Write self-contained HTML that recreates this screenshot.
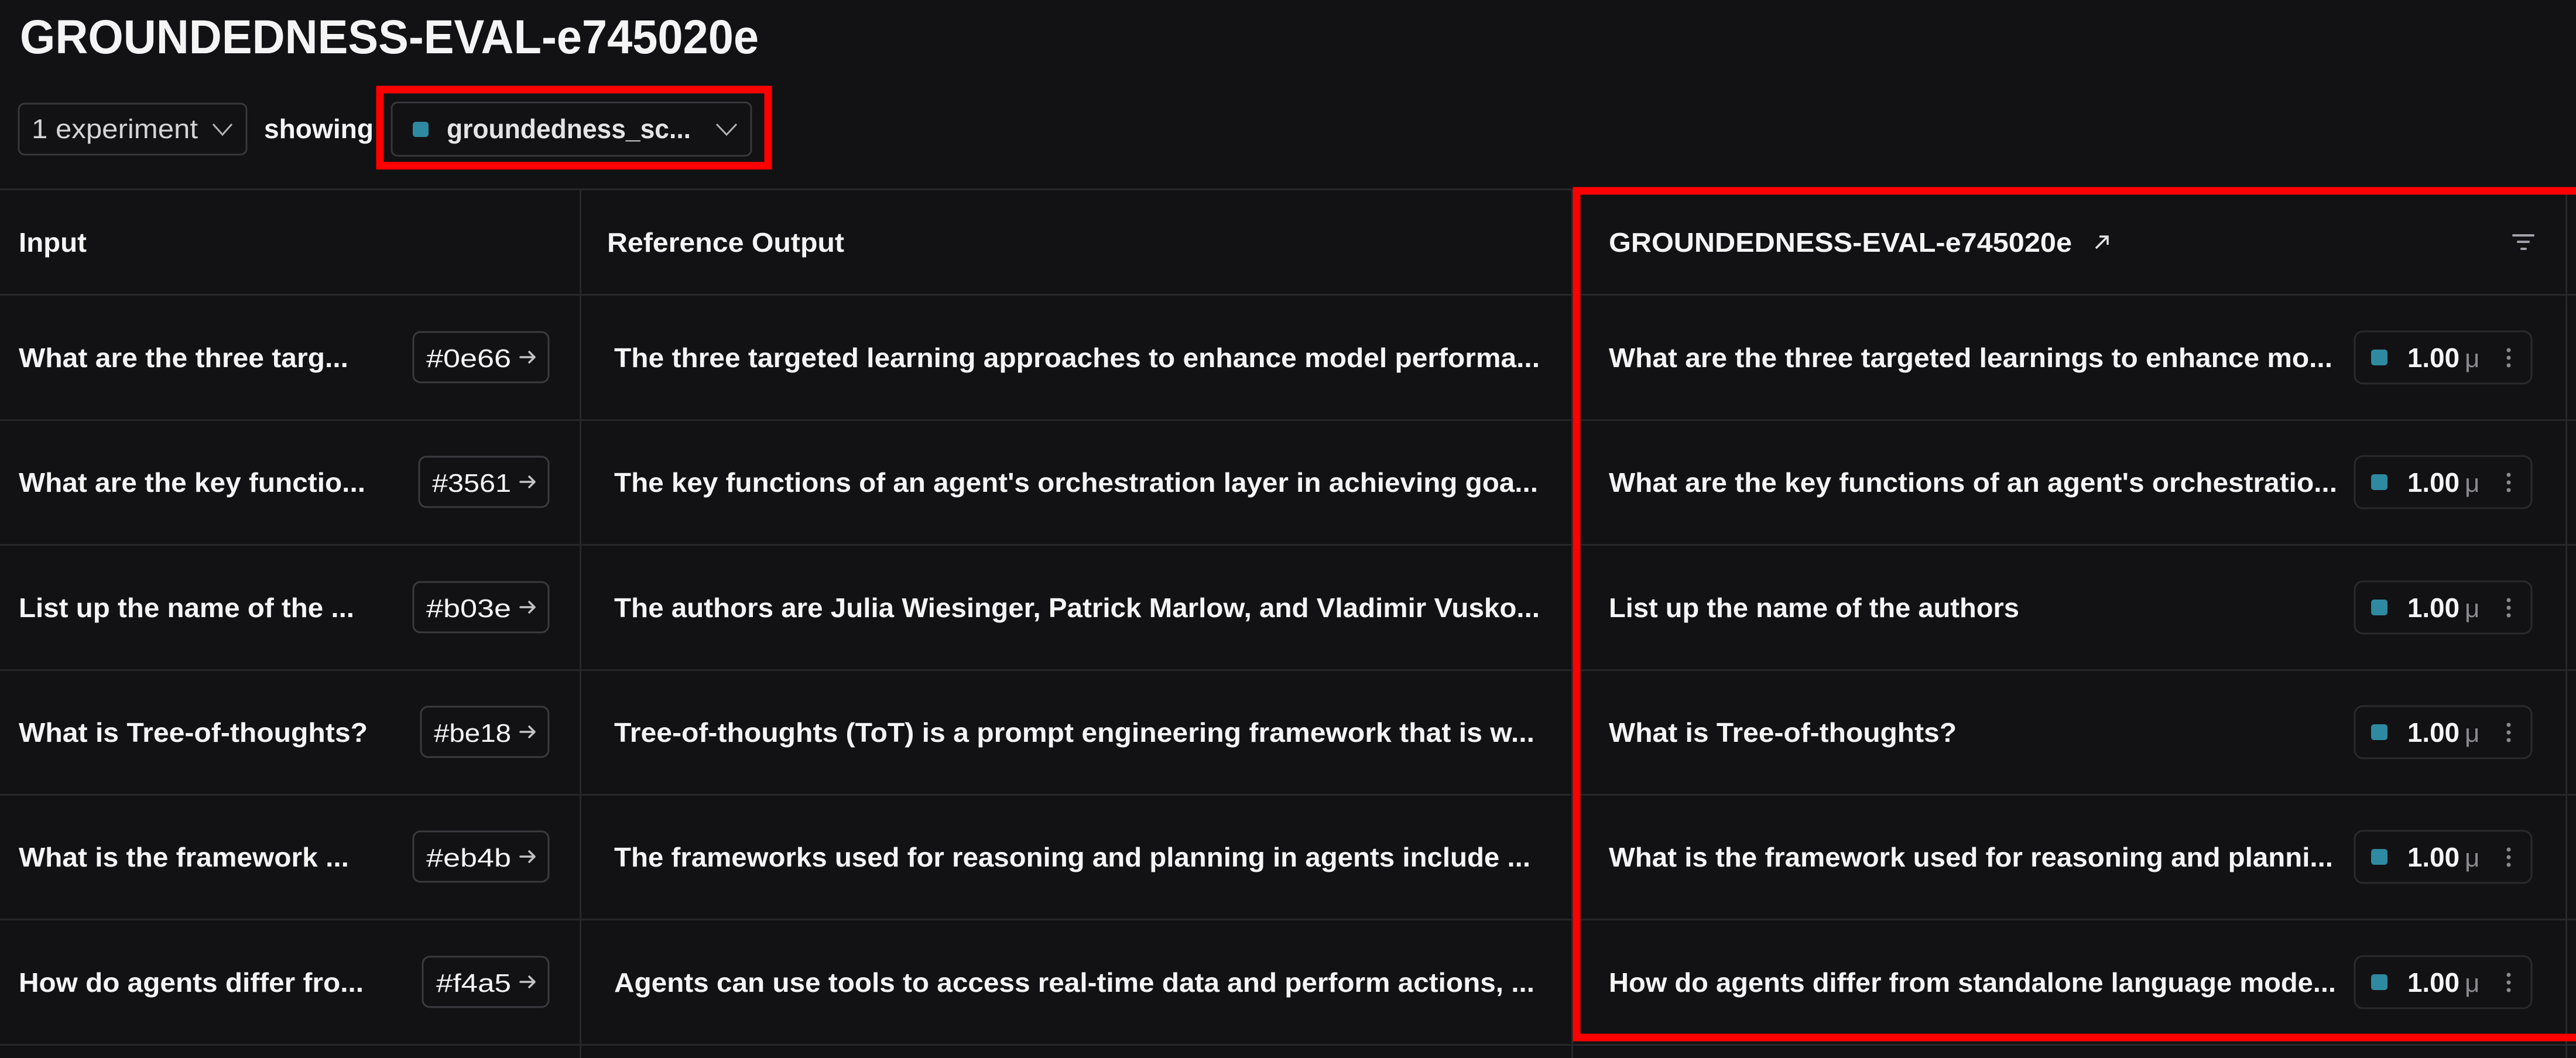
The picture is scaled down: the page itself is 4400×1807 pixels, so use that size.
<!DOCTYPE html>
<html><head><meta charset="utf-8"><style>html,body{margin:0;padding:0;background:#121214;}svg{display:block}</style></head>
<body>
<svg width="4400" height="1807" viewBox="0 0 4400 1807" xmlns="http://www.w3.org/2000/svg" font-family="Liberation Sans, Arial, sans-serif">
<rect width="4400" height="1807" fill="#121214"/>
<!-- title -->
<text x="34" y="91" font-size="82" font-weight="bold" fill="#f4f4f5" textLength="1262" lengthAdjust="spacingAndGlyphs">GROUNDEDNESS-EVAL-e745020e</text>
<!-- controls -->
<rect x="32" y="177" width="389" height="87" rx="10" fill="none" stroke="#37373c" stroke-width="3"/>
<text x="54" y="236" font-size="46" fill="#d4d4d8" textLength="284" lengthAdjust="spacingAndGlyphs">1 experiment</text>
<path d="M364 212 L380 230 L396 212" fill="none" stroke="#b4b4b8" stroke-width="3"/>
<text x="451" y="236" font-size="46" font-weight="bold" fill="#f4f4f5" textLength="187" lengthAdjust="spacingAndGlyphs">showing</text>
<rect x="669" y="175" width="614" height="91" rx="10" fill="none" stroke="#37373c" stroke-width="3"/>
<rect x="705" y="208" width="27" height="26" rx="5" fill="#2e8aa0"/>
<text x="763" y="236" font-size="46" font-weight="bold" fill="#e4e4e7" textLength="417" lengthAdjust="spacingAndGlyphs">groundedness_sc...</text>
<path d="M1224 212 L1241 230 L1258 212" fill="none" stroke="#b4b4b8" stroke-width="3"/>
<rect x="649" y="153" width="663" height="130" fill="none" stroke="#ff0000" stroke-width="13"/>
<!-- grid lines -->
<g fill="#27272b">
<rect x="0" y="322" width="4400" height="3"/>
<rect x="0" y="502" width="4400" height="3"/>
<rect x="0" y="716" width="4400" height="3"/>
<rect x="0" y="929" width="4400" height="3"/>
<rect x="0" y="1143" width="4400" height="3"/>
<rect x="0" y="1356" width="4400" height="3"/>
<rect x="0" y="1569" width="4400" height="3"/>
<rect x="0" y="1783" width="4400" height="3"/>
<rect x="990" y="322" width="3" height="1485"/>
<rect x="2684" y="322" width="3" height="1485"/>
<rect x="4382" y="322" width="3" height="1485"/>
</g>
<!-- headers -->
<g font-size="46" font-weight="bold" fill="#f4f4f5">
<text x="32" y="430" textLength="116" lengthAdjust="spacingAndGlyphs">Input</text>
<text x="1037" y="430" textLength="405" lengthAdjust="spacingAndGlyphs">Reference Output</text>
<text x="2748" y="430" textLength="791" lengthAdjust="spacingAndGlyphs">GROUNDEDNESS-EVAL-e745020e</text>
</g>
<path d="M3580 424 L3600 404 M3586 404 L3600 404 L3600 418" fill="none" stroke="#e4e4e7" stroke-width="3.5"/>
<g stroke="#a1a1aa" stroke-width="4" stroke-linecap="round">
<line x1="4293" y1="402" x2="4327" y2="402"/><line x1="4301" y1="413" x2="4319" y2="413"/><line x1="4307" y1="425" x2="4314" y2="425"/>
</g>
<!-- rows -->
<g font-size="46" font-weight="bold" fill="#f4f4f5">
<text x="32" y="627" textLength="563" lengthAdjust="spacingAndGlyphs">What are the three targ...</text>
<text x="32" y="840" textLength="592" lengthAdjust="spacingAndGlyphs">What are the key functio...</text>
<text x="32" y="1054" textLength="573" lengthAdjust="spacingAndGlyphs">List up the name of the ...</text>
<text x="32" y="1267" textLength="596" lengthAdjust="spacingAndGlyphs">What is Tree-of-thoughts?</text>
<text x="32" y="1480" textLength="564" lengthAdjust="spacingAndGlyphs">What is the framework ...</text>
<text x="32" y="1694" textLength="589" lengthAdjust="spacingAndGlyphs">How do agents differ fro...</text>

<text x="1049" y="627" textLength="1581" lengthAdjust="spacingAndGlyphs">The three targeted learning approaches to enhance model performa...</text>
<text x="1049" y="840" textLength="1578" lengthAdjust="spacingAndGlyphs">The key functions of an agent's orchestration layer in achieving goa...</text>
<text x="1049" y="1054" textLength="1581" lengthAdjust="spacingAndGlyphs">The authors are Julia Wiesinger, Patrick Marlow, and Vladimir Vusko...</text>
<text x="1049" y="1267" textLength="1572" lengthAdjust="spacingAndGlyphs">Tree-of-thoughts (ToT) is a prompt engineering framework that is w...</text>
<text x="1049" y="1480" textLength="1565" lengthAdjust="spacingAndGlyphs">The frameworks used for reasoning and planning in agents include ...</text>
<text x="1049" y="1694" textLength="1572" lengthAdjust="spacingAndGlyphs">Agents can use tools to access real-time data and perform actions, ...</text>

<text x="2748" y="627" textLength="1236" lengthAdjust="spacingAndGlyphs">What are the three targeted learnings to enhance mo...</text>
<text x="2748" y="840" textLength="1244" lengthAdjust="spacingAndGlyphs">What are the key functions of an agent's orchestratio...</text>
<text x="2748" y="1054" textLength="701" lengthAdjust="spacingAndGlyphs">List up the name of the authors</text>
<text x="2748" y="1267" textLength="594" lengthAdjust="spacingAndGlyphs">What is Tree-of-thoughts?</text>
<text x="2748" y="1480" textLength="1237" lengthAdjust="spacingAndGlyphs">What is the framework used for reasoning and planni...</text>
<text x="2748" y="1694" textLength="1242" lengthAdjust="spacingAndGlyphs">How do agents differ from standalone language mode...</text>
</g>
<!-- badges -->
<g fill="none" stroke="#3a3a3f" stroke-width="3">
<rect x="706" y="567" width="231" height="86" rx="12"/>
<rect x="716" y="780" width="221" height="86" rx="12"/>
<rect x="706" y="994" width="231" height="86" rx="12"/>
<rect x="719" y="1207" width="218" height="86" rx="12"/>
<rect x="706" y="1420" width="231" height="86" rx="12"/>
<rect x="722" y="1634" width="215" height="86" rx="12"/>
</g>
<g font-size="44" fill="#f4f4f5">
<text x="728" y="627" textLength="145" lengthAdjust="spacingAndGlyphs">#0e66</text>
<text x="738" y="840" textLength="135" lengthAdjust="spacingAndGlyphs">#3561</text>
<text x="728" y="1054" textLength="145" lengthAdjust="spacingAndGlyphs">#b03e</text>
<text x="741" y="1267" textLength="132" lengthAdjust="spacingAndGlyphs">#be18</text>
<text x="728" y="1480" textLength="145" lengthAdjust="spacingAndGlyphs">#eb4b</text>
<text x="745" y="1694" textLength="128" lengthAdjust="spacingAndGlyphs">#f4a5</text>
</g>
<g fill="none" stroke="#c4c4c8" stroke-width="3.5" stroke-linecap="round" stroke-linejoin="round">
<path d="M889 610 H913 M904 601 L913 610 L904 619"/>
<path d="M889 823 H913 M904 814 L913 823 L904 832"/>
<path d="M889 1037 H913 M904 1028 L913 1037 L904 1046"/>
<path d="M889 1250 H913 M904 1241 L913 1250 L904 1259"/>
<path d="M889 1463 H913 M904 1454 L913 1463 L904 1472"/>
<path d="M889 1677 H913 M904 1668 L913 1677 L904 1686"/>
</g>
<!-- score pills -->
<g id="pills">
<g transform="translate(0,0)">
<rect x="4022" y="566" width="302" height="89" rx="14" fill="none" stroke="#2a2a2e" stroke-width="3"/>
<rect x="4050" y="597" width="28" height="27" rx="5" fill="#2e8aa0"/>
<text x="4112" y="627" font-size="46" font-weight="bold" fill="#f4f4f5" textLength="89" lengthAdjust="spacingAndGlyphs">1.00</text>
<text x="4210" y="627" font-size="44" fill="#8a8a90">μ</text>
<circle cx="4285" cy="598" r="3.5" fill="#8a8a90"/><circle cx="4285" cy="611" r="3.5" fill="#8a8a90"/><circle cx="4285" cy="624" r="3.5" fill="#8a8a90"/>
</g>
</g>
<use href="#pills" transform="translate(0,213)"/>
<use href="#pills" transform="translate(0,427)"/>
<use href="#pills" transform="translate(0,640)"/>
<use href="#pills" transform="translate(0,853)"/>
<use href="#pills" transform="translate(0,1067)"/>
<!-- red highlight column -->
<rect x="2693" y="326" width="3677" height="1446" fill="none" stroke="#ff0000" stroke-width="13"/>
</svg>
</body></html>
